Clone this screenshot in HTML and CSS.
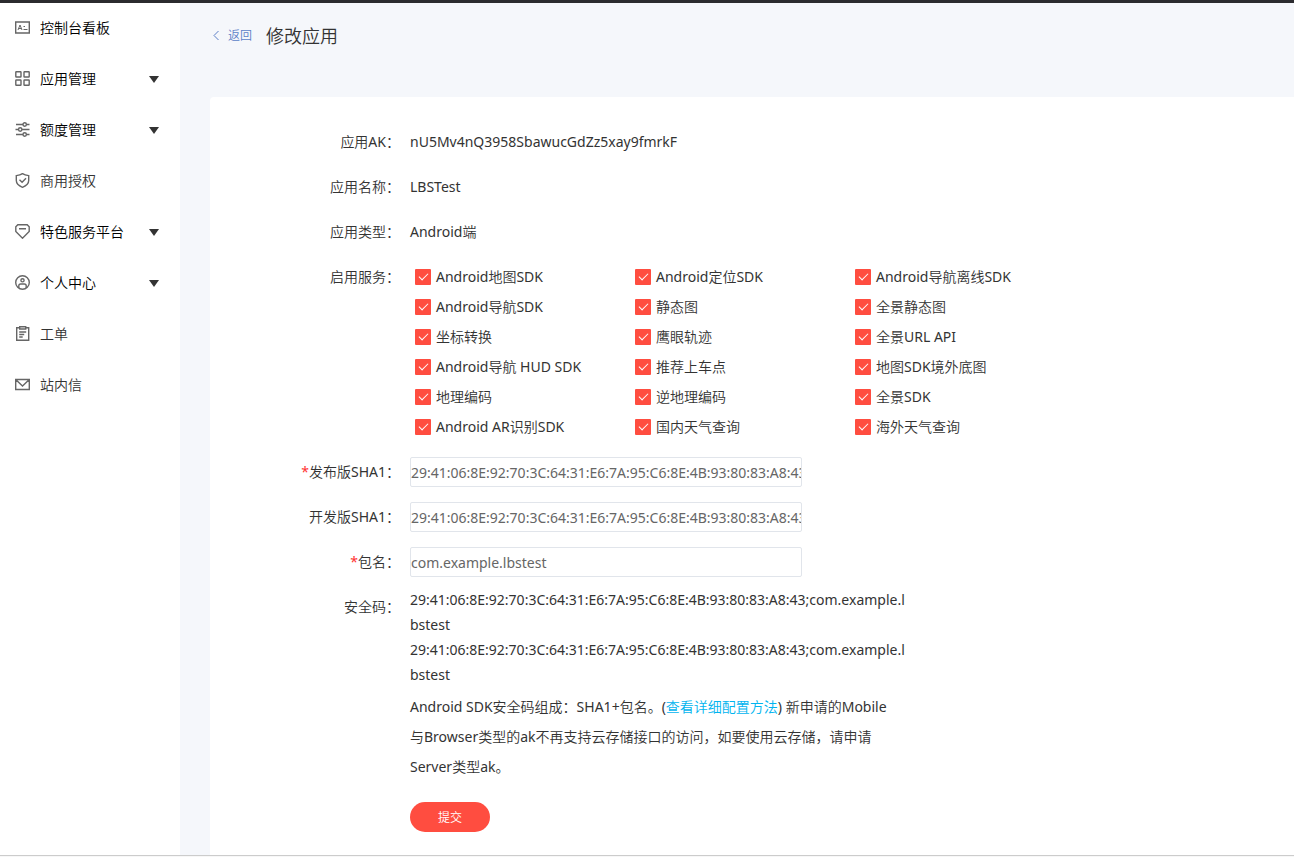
FILE: index.html
```html
<!DOCTYPE html>
<html lang="zh-CN">
<head>
<meta charset="utf-8">
<title>修改应用</title>
<link rel="stylesheet" href="styles.css">
</head>
<body>
<div class="topbar"></div>
<div class="layout">
  <nav class="sidebar">
    <a class="nav-item nav-item-current" href="#"><svg class="nav-icon" viewBox="0 0 15 15"><path d="M.7 2h13.600v11H.7z"/><path class="thin" d="M3 10 5 5l2 5M3.700 8.500h2.600M8.500 6.500h1.500M8.500 9.500h4"/></svg><span>控制台看板</span></a>
    <button class="nav-item nav-item-current" type="button"><svg class="nav-icon" viewBox="0 0 15 15"><rect x=".8" y=".8" width="5.200" height="5.200" rx=".5"/><rect x="9" y=".8" width="5.200" height="5.200" rx=".5"/><rect x=".8" y="9" width="5.200" height="5.200" rx=".5"/><rect x="9" y="9" width="5.200" height="5.200" rx=".5"/></svg><span>应用管理</span><i class="caret"></i></button>
    <button class="nav-item nav-item-current" type="button"><svg class="nav-icon" viewBox="0 0 15 15"><path d="M1 2.500h7M11.500 2.500h3M.5 7.500h2.800M7 7.500h7.500M1 12.500h7M11.500 12.500h3"/><circle cx="9.700" cy="2.500" r="1.700"/><circle cx="5.200" cy="7.500" r="1.700"/><circle cx="9.700" cy="12.500" r="1.700"/></svg><span>额度管理</span><i class="caret"></i></button>
    <a class="nav-item" href="#"><svg class="nav-icon" viewBox="0 0 15 15"><path d="M7.500.7c1.900 1.300 3.800 1.700 6.200 1.900v5c0 3.200-2.900 5.400-6.200 6.700C4.200 13 1.300 10.800 1.300 7.600v-5C3.700 2.400 5.600 2 7.500.7zM4.500 6.800l2.600 2.500 3.900-4"/></svg><span>商用授权</span></a>
    <button class="nav-item nav-item-current" type="button"><svg class="nav-icon" viewBox="0 0 15 15"><path d="M2.800.8h9.400l2 2v4.700L7.500 14.200.8 7.500V2.800zM4 4.800h7"/></svg><span>特色服务平台</span><i class="caret"></i></button>
    <button class="nav-item nav-item-current" type="button"><svg class="nav-icon" viewBox="0 0 15 15"><circle cx="7.500" cy="7.500" r="6.800"/><circle cx="7.500" cy="5.300" r="1.600"/><path d="M3.800 13v-2.200c0-1 .8-1.800 1.800-1.800h3.800c1 0 1.800.8 1.800 1.800V13"/></svg><span>个人中心</span><i class="caret"></i></button>
    <a class="nav-item" href="#"><svg class="nav-icon" viewBox="0 0 15 15"><path d="M4.500 1.800H1.700v12.500h12V1.800H11M4.700.7h6v2.300h-6zM4.200 6h7M4.200 8.500h5M4.200 11h3.500"/></svg><span>工单</span></a>
    <a class="nav-item" href="#"><svg class="nav-icon" viewBox="0 0 15 15"><path d="M.7 2.500h13.600v10H.7zM1.200 3l6.300 6 6.300-6"/></svg><span>站内信</span></a>
  </nav>
  <main class="main">
    <header class="page-head">
      <a class="back" href="#"><svg class="back-icon" viewBox="0 0 8 12"><path d="M6.500 1 2 5.500 6.500 10"/></svg>返回</a>
      <h1 class="title">修改应用</h1>
    </header>
    <form class="panel">
      <div class="row"><span class="label">应用AK：</span><span class="value">nU5Mv4nQ3958SbawucGdZz5xay9fmrkF</span></div>
      <div class="row"><span class="label">应用名称：</span><span class="value">LBSTest</span></div>
      <div class="row"><span class="label">应用类型：</span><span class="value">Android端</span></div>
      <div class="row">
        <span class="label" id="services">启用服务：</span>
        <div class="services" role="group" aria-labelledby="services">
          <label class="service"><input class="check" type="checkbox" checked>Android地图SDK</label>
          <label class="service"><input class="check" type="checkbox" checked>Android定位SDK</label>
          <label class="service"><input class="check" type="checkbox" checked>Android导航离线SDK</label>
          <label class="service"><input class="check" type="checkbox" checked>Android导航SDK</label>
          <label class="service"><input class="check" type="checkbox" checked>静态图</label>
          <label class="service"><input class="check" type="checkbox" checked>全景静态图</label>
          <label class="service"><input class="check" type="checkbox" checked>坐标转换</label>
          <label class="service"><input class="check" type="checkbox" checked>鹰眼轨迹</label>
          <label class="service"><input class="check" type="checkbox" checked>全景URL API</label>
          <label class="service"><input class="check" type="checkbox" checked>Android导航 HUD SDK</label>
          <label class="service"><input class="check" type="checkbox" checked>推荐上车点</label>
          <label class="service"><input class="check" type="checkbox" checked>地图SDK境外底图</label>
          <label class="service"><input class="check" type="checkbox" checked>地理编码</label>
          <label class="service"><input class="check" type="checkbox" checked>逆地理编码</label>
          <label class="service"><input class="check" type="checkbox" checked>全景SDK</label>
          <label class="service"><input class="check" type="checkbox" checked>Android AR识别SDK</label>
          <label class="service"><input class="check" type="checkbox" checked>国内天气查询</label>
          <label class="service"><input class="check" type="checkbox" checked>海外天气查询</label>
        </div>
      </div>
      <div class="row"><label class="label" for="release"><span class="required">*</span>发布版SHA1：</label><input class="field" id="release" type="text" value="29:41:06:8E:92:70:3C:64:31:E6:7A:95:C6:8E:4B:93:80:83:A8:43"></div>
      <div class="row"><label class="label" for="debug">开发版SHA1：</label><input class="field" id="debug" type="text" value="29:41:06:8E:92:70:3C:64:31:E6:7A:95:C6:8E:4B:93:80:83:A8:43"></div>
      <div class="row"><label class="label" for="package"><span class="required">*</span>包名：</label><input class="field" id="package" type="text" value="com.example.lbstest"></div>
      <div class="row row-code">
        <span class="label">安全码：</span>
        <div class="security">
          <div class="code">29:41:06:8E:92:70:3C:64:31:E6:7A:95:C6:8E:4B:93:80:83:A8:43;com.example.lbstest</div>
          <div class="code">29:41:06:8E:92:70:3C:64:31:E6:7A:95:C6:8E:4B:93:80:83:A8:43;com.example.lbstest</div>
          <p class="hint">Android SDK安全码组成：SHA1+包名。(<a class="link" href="#">查看详细配置方法</a>) 新申请的Mobile<br>与Browser类型的ak不再支持云存储接口的访问，如要使用云存储，请申请<br>Server类型ak。</p>
          <button class="submit" type="submit">提交</button>
        </div>
      </div>
    </form>
  </main>
</div>
<div class="bottom-line"></div>
</body>
</html>
```

FILE: styles.css
```css
* { box-sizing: border-box; }

body {
  margin: 0;
  min-height: 100vh;
  display: flex;
  flex-direction: column;
  background: #fff;
  color: #333;
  font: 400 14px/30px "Noto Sans", "Noto Sans CJK SC DemiLight", "Noto Sans CJK SC", sans-serif;
}

a { text-decoration: none; }
button, input { font: inherit; }

.topbar { height: 3px; background: #2b2b2f; }
.layout { flex: 1; display: flex; }
.bottom-line { height: 2px; border-top: 1px solid #ccc; background: #f7f7f7; }

.sidebar { flex: 0 0 180px; font-weight: 350; }

.nav-item {
  display: flex;
  align-items: center;
  gap: 10px;
  width: 100%;
  height: 51px;
  padding: 0 21px 2px 15px;
  border: 0;
  background: none;
  color: #333;
  text-align: left;
  cursor: pointer;
}
.nav-item-current { color: #000; }

.nav-icon {
  width: 15px;
  height: 15px;
  fill: none;
  stroke: #666;
  stroke-width: 1.4;
}
.nav-icon .thin { stroke-width: 1; }

.caret {
  margin: 2px 0 0 auto;
  border: 5px solid transparent;
  border-top: 7px solid #333;
  border-bottom: 0;
}

.main {
  flex: 1;
  min-width: 0;
  display: flex;
  flex-direction: column;
  padding-left: 30px;
  background: #f5f7fb;
}

.page-head {
  display: flex;
  align-items: center;
  gap: 14px;
  height: 94px;
  padding: 0 2px 28px;
  font-weight: 350;
}
.back {
  display: flex;
  align-items: center;
  gap: 8px;
  color: #5b7fc7;
  font-size: 12px;
}
.back-icon {
  width: 8px;
  height: 12px;
  fill: none;
  stroke: #5b7fc7;
}
.title { margin: 0; font-size: 18px; font-weight: inherit; }

.panel {
  flex: 1;
  padding: 30px 0 23px;
  border-top-left-radius: 4px;
  background: #fff;
}

.row { display: flex; gap: 10px; margin-bottom: 15px; }
.label { flex: 0 0 190px; text-align: right; }
.required { color: #f33; }

.services {
  display: grid;
  grid-template-columns: repeat(3, 220px);
  padding-left: 5px;
}
.service { display: flex; align-items: center; gap: 5px; white-space: nowrap; }
.check {
  appearance: none;
  display: grid;
  place-items: center;
  width: 16px;
  height: 16px;
  margin: 0;
  border-radius: 1px;
  background: #ff4d40;
}
.check:checked::after {
  content: "";
  width: 8px;
  height: 4px;
  margin-bottom: 3px;
  border: solid #fff;
  border-width: 0 0 1px 1px;
  transform: rotate(-45deg);
}

.field {
  width: 392px;
  height: 30px;
  padding: 2px 0 0;
  border: 1px solid #e1e5eb;
  border-radius: 2px;
  background: #fff;
  color: #666;
  outline: 0;
}

.row-code { margin: -5px 0 0; }
.row-code .label { line-height: 40px; }
.security { flex: 0 1 500px; min-width: 0; }
.code { line-height: 25px; word-break: break-all; }
.hint { margin: 5px 0 20px; }
.link { color: #00b4ef; }

.submit {
  display: block;
  width: 80px;
  height: 30px;
  padding: 2px 0 0;
  border: 0;
  border-radius: 15px;
  background: #ff4d40;
  color: #fff;
  font-size: 12px;
  line-height: 28px;
  cursor: pointer;
}
```
